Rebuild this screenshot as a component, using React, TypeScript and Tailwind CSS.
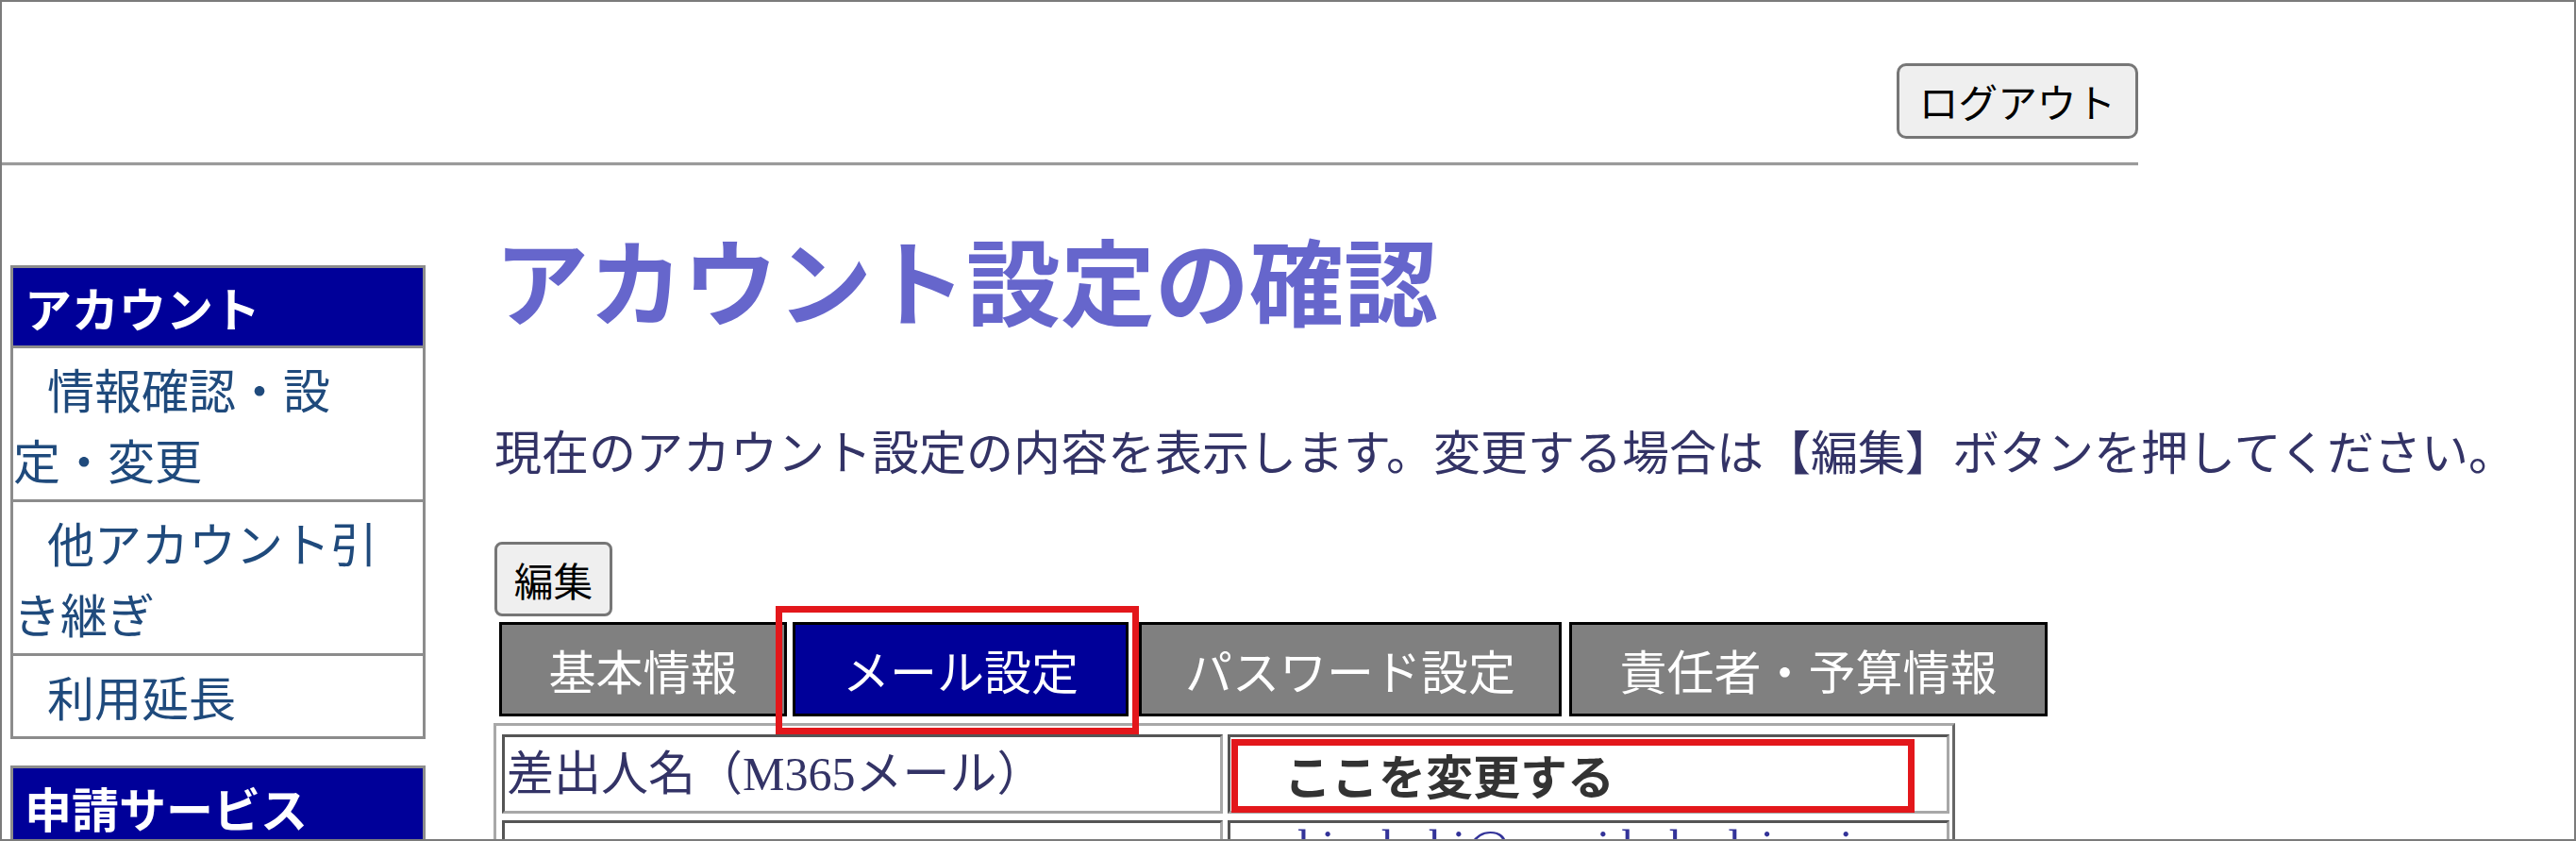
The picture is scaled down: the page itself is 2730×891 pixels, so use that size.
export default function App() {
  const tabBase =
    "h-[100px] shrink-0 border-[3px] border-black text-white text-[50px] leading-[75px] flex items-center justify-center whitespace-nowrap";
  const cell =
    "border-[3px] border-t-[#555555] border-l-[#555555] border-b-[#a8a8a8] border-r-[#a8a8a8] text-[50px] leading-[75px] px-[2px] whitespace-nowrap overflow-hidden";
  return (
    <div className="relative w-[2730px] h-[891px] overflow-hidden border-2 border-[#7b7b7b] bg-white font-['Noto_Sans_CJK_JP',sans-serif]">
      {/* header */}
      <div className="w-[2264px]">
        <div className="flex justify-end pt-[65px]">
          <button className="h-[80px] w-[256px] rounded-[10px] border-[3px] border-[#767676] bg-[#efefef] text-[41.7px] leading-[50px] text-black">
            ログアウト
          </button>
        </div>
        <div className="mt-[25px] h-[4px] border-t-[3px] border-t-[#9a9a9a] border-b border-b-[#ececec]"></div>
      </div>

      <div className="flex">
        {/* sidebar */}
        <aside className="ml-[9px] mt-[105px] w-[440px] shrink-0">
          <div className="border-[3px] border-[#8c8c8c]">
            <div className="bg-[#000099] text-white font-bold text-[50px] leading-[75px] py-[3.5px] pl-[12px] border-b-[3px] border-[#8c8c8c] whitespace-nowrap">
              アカウント
            </div>
            <div className="text-[#1f4a7c] text-[50px] leading-[75px] py-[5px] indent-[36px] border-b-[3px] border-[#8c8c8c] whitespace-nowrap">
              情報確認・設
              <br />
              定・変更
            </div>
            <div className="text-[#1f4a7c] text-[50px] leading-[75px] py-[5px] indent-[36px] border-b-[3px] border-[#8c8c8c] whitespace-nowrap">
              他アカウント引
              <br />
              き継ぎ
            </div>
            <div className="text-[#1f4a7c] text-[50px] leading-[75px] py-[5px] indent-[36px] whitespace-nowrap">
              利用延長
            </div>
          </div>
          <div className="mt-[28px] border-[3px] border-[#8c8c8c]">
            <div className="bg-[#000099] text-white font-bold text-[50px] leading-[75px] py-[3.5px] pl-[12px] border-b-[3px] border-[#8c8c8c] whitespace-nowrap">
              申請サービス
            </div>
          </div>
        </aside>

        {/* main */}
        <main className="ml-[73px] mt-[69px] flex flex-col items-start">
          <h1 className="text-[100px] leading-[100px] font-bold text-[#6666cc] whitespace-nowrap">
            アカウント設定の確認
          </h1>
          <p className="mt-[94px] text-[50px] leading-[75px] text-[#333366] whitespace-nowrap">
            現在のアカウント設定の内容を表示します。変更する場合は【編集】ボタンを押してください。
          </p>
          <button className="mt-[60px] h-[79px] w-[125px] rounded-[8px] border-[3px] border-[#767676] bg-[#efefef] text-[41.7px] leading-[50px] text-black">
            編集
          </button>

          <div className="mt-[6px] flex">
            <div className={`${tabBase} ml-[5px] w-[305px] bg-[#808080]`}>基本情報</div>
            <div className={`${tabBase} ml-[6px] w-[356px] bg-[#000099]`}>メール設定</div>
            <div className={`${tabBase} ml-[11px] w-[448px] bg-[#808080]`}>パスワード設定</div>
            <div className={`${tabBase} ml-[8px] w-[507px] bg-[#808080]`}>責任者・予算情報</div>
          </div>

          <div className="-ml-px mt-[7px] w-[1549px] border-[3px] border-t-[#a8a8a8] border-l-[#a8a8a8] border-b-[#666666] border-r-[#666666] pt-[9px] px-[6px] pb-[6px]">
            <div className="grid grid-cols-[764px_765px] gap-x-[5px] gap-y-[7px]">
              <div className={`${cell} h-[84px] flex items-center text-[#333366] font-['Liberation_Serif','Noto_Sans_CJK_JP',serif]`}>
                差出人名（M365メール）
              </div>
              <div className={`${cell} h-[84px] flex items-center pl-[57px] font-bold text-[#333333]`}>
                ここを変更する
              </div>
              <div className={`${cell} h-[84px] pt-[24px] text-[#333366] font-['Liberation_Serif','Noto_Sans_CJK_JP',serif]`}>
                メールアドレス
              </div>
              <div className={`${cell} h-[84px] pl-[52px] text-[#333399] font-['Liberation_Serif','Noto_Sans_CJK_JP',serif]`}>
                <div className="leading-[50px]">shinohohi@m.sci.hokudai.ac.jp</div>
              </div>
            </div>
          </div>
        </main>
      </div>

      {/* annotation boxes */}
      <div className="absolute left-[820px] top-[640px] w-[385px] h-[136px] border-[7px] border-[#e3171b]"></div>
      <div className="absolute left-[1303px] top-[781px] w-[724px] h-[78px] border-[7px] border-[#e3171b]"></div>
    </div>
  );
}
